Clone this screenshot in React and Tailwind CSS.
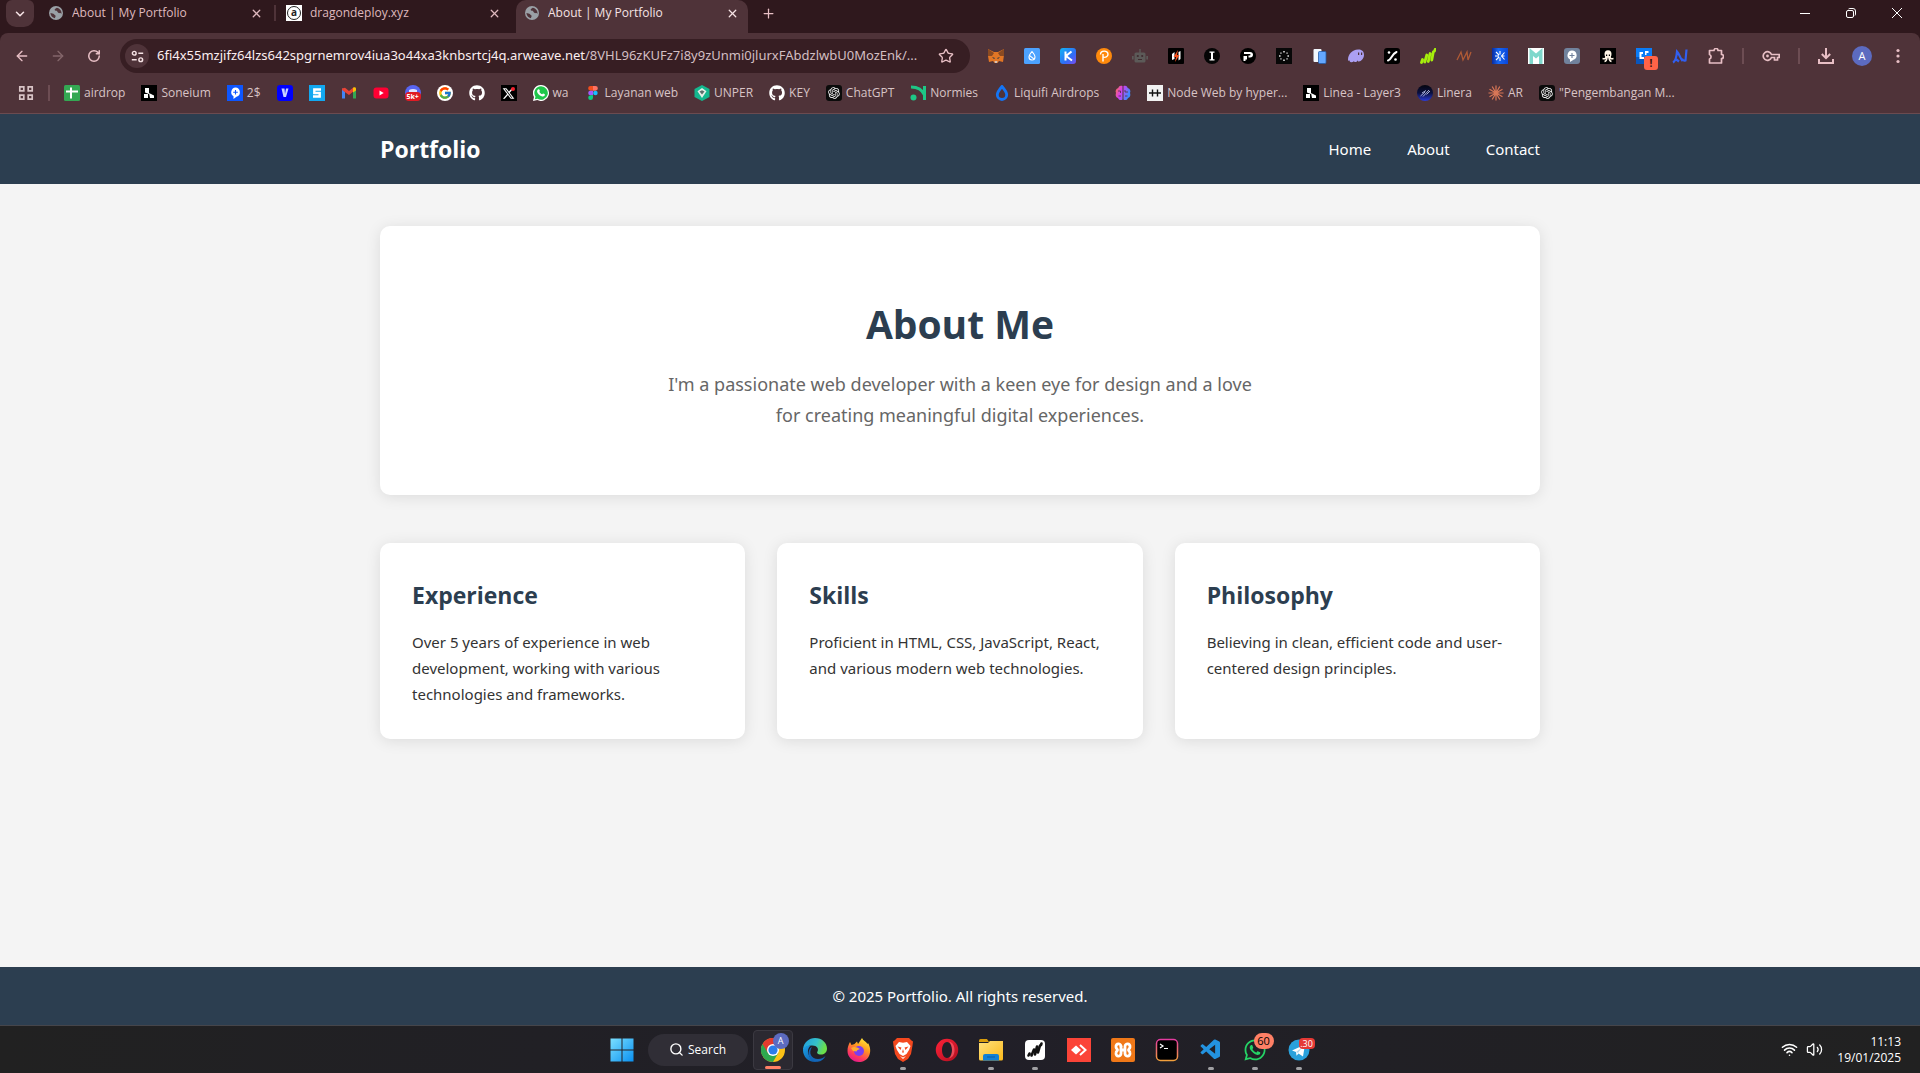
import React from "react";
import { FaGithub, FaXTwitter, FaWhatsapp } from "react-icons/fa6";
import { FcGoogle } from "react-icons/fc";
import { RiOpenaiFill } from "react-icons/ri";
import { VscVscode } from "react-icons/vsc";
import { ArrowLeft, ArrowRight, ChevronDown, Plus, RotateCw, Search, Star, X, Wifi, Volume2 } from "lucide-react";

/* ---------- small drawing helpers ---------- */

function Icon({ children, box = 16, className = "size-4" }) {
  return (
    <svg viewBox={`0 0 ${box} ${box}`} className={`${className} shrink-0`} aria-hidden="true">
      {children}
    </svg>
  );
}

const Globe = () => (
  <Icon className="size-[14px]">
    <circle cx="8" cy="8" r="8" fill="#9aa0a6" />
    <path d="M1.6 8c1.7.6 3.3.2 4.2 1.5.9 1.3 2 1.2 1.7 2.6L6.6 14C3.9 13.3 1.8 11 1.6 8zM8.8 2c-.8.9-2.6 1.3-2.3 2.6.3 1 2.2.5 2.8 1.5.7 1.2 1.5 2.3 3 2 1-.2 1.7.3 2 1 .3-3.4-1.800-6.400-5.500-7.100z" fill="#4f3339" />
  </Icon>
);

const Soneium = () => (
  <Icon>
    <path d="M0 0h16v16H0z" fill="#000" />
    <path d="M4 3h4v6l-4-1.5zM3 9h4v4H3zM8 8l5 2.5V13H9z" fill="#fff" />
  </Icon>
);

const OpenAi = () => (
  <span className="grid size-4 place-items-center rounded-[3px] bg-[#0b0b0b] text-[14px] text-white">
    <RiOpenaiFill />
  </span>
);

const WhatsappColor = () => (
  <Icon>
    <path d="M8 0a8 8 0 1 1-3.7 15.1L0 16l1-4A8 8 0 0 1 8 0z" fill="#fff" />
    <path d="M8 1.3a6.7 6.7 0 1 1-3.4 12.4l-2.8.6.7-2.6A6.7 6.7 0 0 1 8 1.3z" fill="#1fc64a" />
    <path d="M5.3 4.3c.6-.4 1 0 1.3.7.3.8.4 1-.2 1.7.6 1.3 1.5 2.1 2.8 2.6.6-.7.8-1 1.5-.6 1.2.6 1.4.6 1.1 1.5-.5 1.2-1.9 1.4-3.2 1-2.4-.8-4.2-2.8-4.5-4.5-.1-1 .4-2 1.2-2.4z" fill="#fff" />
  </Icon>
);

/* ---------- tab strip ---------- */

const TabIcon = ({ children }) => (
  <span className="grid size-4 shrink-0 place-items-center">{children}</span>
);

function Tab({ icon, title, active }) {
  return (
    <div
      role="tab"
      aria-selected={!!active}
      className={`flex w-[232px] shrink-0 items-center px-2 pb-[7px] ${
        active ? "rounded-t-[10px] bg-[#4f3339] text-[#f6e3e5]" : "text-[#dfb8be]"
      }`}
    >
      <TabIcon>{icon}</TabIcon>
      <span className="ml-2 flex-1 truncate text-[12px]">{title}</span>
      <button aria-label={`Close ${title}`} className="grid size-4 place-items-center">
        <X size={13} strokeWidth={2.4} />
      </button>
    </div>
  );
}

const WindowControls = () => (
  <div className="ml-auto flex h-[26px] items-center text-white">
    <button aria-label="Minimize" className="grid w-[46px] place-items-center">
      <Icon box={10} className="size-2.5"><path d="M0 5.5h10" stroke="currentColor" /></Icon>
    </button>
    <button aria-label="Restore" className="grid w-[46px] place-items-center">
      <Icon box={10} className="size-2.5">
        <rect x=".5" y="2.5" width="7" height="7" rx="1.5" fill="none" stroke="currentColor" />
        <path d="M2.5 1Q3 .5 4 .5h3Q9.5.5 9.5 3v3q0 1-.5 1.5" fill="none" stroke="currentColor" />
      </Icon>
    </button>
    <button aria-label="Close window" className="grid w-[46px] place-items-center">
      <Icon box={10} className="size-2.5"><path d="M0 0l10 10M10 0L0 10" stroke="currentColor" /></Icon>
    </button>
  </div>
);

function TabStrip() {
  return (
    <div className="flex h-[33px] items-stretch bg-[#2f181d]">
      <button aria-label="Search tabs" className="ml-1.5 grid h-[27px] w-7 place-items-center rounded-b-[10px] rounded-t-md bg-[#4f3339] text-[#f6e3e5]">
        <ChevronDown size={14} strokeWidth={2.6} />
      </button>
      <div role="tablist" className="ml-1.5 flex">
        <Tab icon={<Globe />} title="About | My Portfolio" />
        <span className="ml-0.5 mr-0.5 mt-[5px] h-4 w-0.5 bg-[#4f3339]" />
        <Tab
          icon={
            <span className="grid size-4 place-items-center bg-white">
              <span className="grid size-3.5 place-items-center rounded-full border border-[#222] pb-0.5 text-[10px] font-bold leading-none text-[#222]">a</span>
            </span>
          }
          title="dragondeploy.xyz"
        />
        <span className="w-1.5" />
        <Tab icon={<Globe />} title="About | My Portfolio" active />
      </div>
      <button aria-label="New tab" className="ml-3 grid h-[26px] w-4 place-items-center text-[#e8bfc5]">
        <Plus size={15} strokeWidth={2} />
      </button>
      <WindowControls />
    </div>
  );
}

/* ---------- toolbar ---------- */

const EXTENSIONS = [
  ["MetaMask", <Icon>
    <path d="M0 1l6 3h4l6-3v6l-1 7-4-1-1.5 2h-3L5 13l-4 1-1-6z" fill="#e27625" />
    <path d="M0 1l6 4-2 3H0zM16 1l-6 4 2 3h4z" fill="#8a4a22" />
    <path d="M4 9l3 1-1 1zM12 9l-3 1 1 1z" fill="#233447" />
    <path d="M6.5 13h3l-.5 2H7z" fill="#d7c1b3" />
  </Icon>],
  ["Sui wallet", <Icon>
    <rect width="16" height="16" rx="1.5" fill="#4ca2ff" />
    <path d="M8 3.500c1.800 2.200 3 3.700 3 5.500a3 3 0 0 1-6 0C5 7.200 6.200 5.700 8 3.500zM5.800 7.500c1.200 2 3.600 1.500 4 4" fill="none" stroke="#fff" strokeWidth="1.1" />
  </Icon>],
  ["Keplr", <Icon>
    <defs><linearGradient id="kp" x1="0" y1="0" x2="1" y2="1"><stop stopColor="#12b5f5" /><stop offset=".6" stopColor="#2f6df6" /><stop offset="1" stopColor="#7a4cf0" /></linearGradient></defs>
    <rect width="16" height="16" rx="3" fill="url(#kp)" />
    <path d="M5.5 3.5v9M11.5 3.5L6 8l6 4.5" fill="none" stroke="#fff" strokeWidth="2" />
  </Icon>],
  ["Petra", <Icon>
    <circle cx="8" cy="8" r="8" fill="#ff8a0c" />
    <path d="M7 13.500V6M4.500 6.500c0-4.500 7.500-4.500 7.500-.3 0 2.800-3 3.600-4.500 2.800" fill="none" stroke="#fff" strokeWidth="1.4" />
  </Icon>],
  ["Robot", <Icon>
    <rect x="2.500" y="4.500" width="11" height="10" rx="1.500" fill="#5c5a58" />
    <path d="M7.300 1h1.400v4H7.300zM0 8h1.700v3.500H0zM14.300 8H16v3.500h-1.700z" fill="#5c5a58" />
    <circle cx="5.800" cy="8" r="1.100" fill="#3f2b2f" /><circle cx="10.200" cy="8" r="1.100" fill="#3f2b2f" />
    <path d="M6 11.500h4" stroke="#3f2b2f" />
  </Icon>],
  ["Trading helper", <Icon>
    <rect width="16" height="16" rx="1" fill="#000" />
    <path d="M4 6l2.500-2v7L4 12zM10.500 4L12.500 3v8l-2 1.500z" fill="#fff" />
    <path d="M10 2L5.500 9H8l-1 5 4.500-7H9z" fill="#f4511e" />
  </Icon>],
  ["Injective", <Icon>
    <circle cx="8" cy="8" r="8" fill="#050505" /><path d="M5.500 3.500h5v1.300H9v6.400h1.500v1.300h-5v-1.300H7V4.800H5.500z" fill="#fff" />
  </Icon>],
  ["Pontem", <Icon>
    <circle cx="8" cy="8" r="8" fill="#000" /><path d="M4 4h6c4 0 4 5.500 0 5.500H8.500v-2h1.300c1 0 1-1.500 0-1.500H4zM3.500 8H7v3.500H5.500V13H3.500z" fill="#fff" />
  </Icon>],
  ["Dots", <Icon>
    <path d="M0 0h16v16H0z" fill="#080808" />
    <path d="M7.200 3h1.600v1.600H7.200zM7.200 11.400h1.600V13H7.200zM3 7.200h1.600v1.600H3zM11.400 7.200H13v1.600h-1.600zM4.300 4.500h1.300v1.300H4.300zM10.400 4.500h1.300v1.300h-1.300zM4.300 10.200h1.300v1.300H4.300zM10.400 10.200h1.300v1.300h-1.300z" fill="#ddd" />
  </Icon>],
  ["Cards", <Icon>
    <rect x="1.5" y="1" width="8" height="13" rx="1" fill="#f2f8ff" /><rect x="6.5" y="3.5" width="7.5" height="12" rx="1" fill="#64a7ff" stroke="#255da8" strokeWidth=".8" />
  </Icon>],
  ["Phantom", <Icon>
    <path d="M0 12C0 6 4 2 10 1.5c4-.3 6 2 6 5.5s-3 6.5-5 6.5c-1 0-1.3-.6-1-1.3-1 1.3-2 2-3 1.9-.8 0-1-.6-.8-1.2C5 14 3.6 14.5 2.5 14c-1-.4-.8-1.2-.6-1.8C1 13 0 13 0 12z" fill="#ab9ff2" />
    <path d="M10 4.5h1.2V7H10zM13 4.5h1.2V7H13z" fill="#4f3339" />
  </Icon>],
  ["Percent", <Icon>
    <rect width="16" height="16" rx="3" fill="#000" /><path d="M4 12.500c4-1 3-6 8.500-8.500" fill="none" stroke="#fff" strokeWidth="2" strokeLinecap="round" />
    <circle cx="5" cy="4.500" r="1.300" fill="#fff" /><circle cx="11.500" cy="11.500" r="1.300" fill="#fff" />
  </Icon>],
  ["Grass", <Icon>
    <path d="M1.5 14.500l1-3M4.800 14l2-7M8.300 13.500l1.800-8M11.800 12l1.500-8M14.500 3l.8-1.800" stroke="#a6ee0c" strokeWidth="2.800" strokeLinecap="round" />
  </Icon>],
  ["Nodepay", <Icon>
    <path d="M1 12L5 4l2 8 4-8 1 8 3-8" fill="none" stroke="#b05a35" strokeWidth="1.3" />
  </Icon>],
  ["Blue star", <Icon>
    <defs><linearGradient id="bs"><stop stopColor="#0a2a9c" /><stop offset=".4" stopColor="#1668f5" /><stop offset="1" stopColor="#0b46d8" /></linearGradient></defs>
    <path d="M0 0h16v16H0z" fill="url(#bs)" />
    <path d="M4 4l3 3M4 12l3-3M3 8h4M8 3v3.500M8 13V9.500M12.500 4.500L9.500 8l3 3.500M9.500 8h3" stroke="#fff" strokeWidth="1.1" fill="none" />
  </Icon>],
  ["M wallet", <Icon>
    <path d="M0 0h16v16H0z" fill="#fff" /><path d="M1.5 0L8 5.5 14.5 0v16H11V8L8 10.5 5 8v8H1.5z" fill="#7fd8cc" />
  </Icon>],
  ["Chat bubble", <Icon>
    <rect width="16" height="16" rx="3" fill="#71829c" /><path d="M8 2.5a4.8 4.8 0 0 1 1.5 9.3L6 14v-2.5A4.800 4.800 0 0 1 8 2.500z" fill="#fff" /><path d="M8 5v5M5.5 7.5h5" stroke="#71829c" strokeWidth="1.1" />
  </Icon>],
  ["Octopus", <Icon>
    <path d="M0 0h16v16H0z" fill="#000" />
    <ellipse cx="8" cy="6" rx="3.500" ry="3.800" fill="#fff5e6" />
    <path d="M6 8c0 3-1 3-3.500 2.500M7 9c0 3-.5 4-2.500 4.500M9 9c0 3 .5 4 2.500 4.500M10 8c0 3 1 3 3.500 2.500" fill="none" stroke="#fff5e6" strokeWidth="1.600" />
    <path d="M6 6.500h1.200V8H6zM8.800 6.500H10V8H8.800z" fill="#000" />
  </Icon>],
  ["Blocks", <span className="relative block">
    <Icon><path d="M0 0h16v16H0z" fill="#0a7cf7" /><path d="M0 9h9v7H0z" fill="#063e96" opacity=".6" /><path d="M3.500 4H7v2H5.500v3H8v2H3.500zM9 3h3.500v2h-2v2H9z" fill="#fff" /></Icon>
    <span className="absolute left-2 top-2 grid h-3.5 w-3.5 place-items-center rounded-[3px] bg-[#ff6347] text-[10px] font-bold leading-none text-[#31100c]">!</span>
  </span>],
  ["Nightly", <Icon>
    <path d="M1 14.500c2-1 3.500-5 4-11 2 2 4 8 5.500 9.500M3 10.500l4 3M14.500 1.500l-1 11c-1.500.5-3-.5-3.500-2" fill="none" stroke="#315ff0" strokeWidth="2.200" />
  </Icon>],
];

const Divider = () => <span className="h-4 w-0.5 shrink-0 bg-[#6d4d53]" />;

function Toolbar() {
  return (
    <div className="bg-[#2f181d]">
      <div className="flex h-[46px] items-center rounded-t-[8px] bg-[#4f3339] pr-3.5 text-[#e8bfc5]">
        <button aria-label="Back" className="ml-3.5 grid w-4 place-items-center"><ArrowLeft size={16} /></button>
        <button aria-label="Forward" className="ml-5 grid w-4 place-items-center text-[#84666b]"><ArrowRight size={16} /></button>
        <button aria-label="Reload" className="ml-5 grid w-4 place-items-center"><RotateCw size={14} strokeWidth={2.6} /></button>
        <div className="ml-[18px] flex h-[34px] min-w-0 flex-1 items-center rounded-full bg-[#371e23] pl-[5px] pr-4">
          <button aria-label="Site information" className="grid size-6 shrink-0 place-items-center rounded-full bg-[#4f3339] text-[#f6e3e5]">
            <Icon className="size-[13px]">
              <path d="M9 4h6M1 12h6" stroke="currentColor" strokeWidth="1.8" />
              <circle cx="4" cy="4" r="2.3" fill="none" stroke="currentColor" strokeWidth="1.8" />
              <circle cx="12" cy="12" r="2.3" fill="none" stroke="currentColor" strokeWidth="1.8" />
            </Icon>
          </button>
          <a href="#address" className="ml-2 min-w-0 flex-1 whitespace-nowrap font-['Noto_Sans','Open_Sans',sans-serif] text-[13px] text-[#d3bfc2]">
            <span className="text-[#fbeef0]">6fi4x55mzjifz64lzs642spgrnemrov4iua3o44xa3knbsrtcj4q.arweave.net</span>/8VHL96zKUFz7i8y9zUnmi0jlurxFAbdzlwbU0MozEnk/...
          </a>
          <button aria-label="Bookmark this page" className="ml-3"><Star size={16} /></button>
        </div>
        <div className="ml-[18px] flex shrink-0 items-center gap-5">
          {EXTENSIONS.map(([name, icon]) => (
            <button key={name} aria-label={name} className="size-4">{icon}</button>
          ))}
          <button aria-label="Extensions" className="size-4">
            <Icon><path d="M1.5 2.5H6a2 2 0 0 1 4 0h3.5v4a2 2 0 0 1 0 4V15h-12v-4a2.4 2.4 0 0 0 0-4.5z" fill="none" stroke="currentColor" strokeWidth="1.7" strokeLinejoin="round" /></Icon>
          </button>
        </div>
        <div className="ml-[18px] flex shrink-0 items-center gap-[18px]">
          <Divider />
          <button aria-label="Passwords" className="w-[18px]">
            <Icon box={18} className="size-[18px]"><path d="M9.5 7.5A4.3 4.3 0 1 0 9.5 10.5h3V13h3v-2.500h1.700v-3z" fill="none" stroke="currentColor" strokeWidth="1.7" /><circle cx="5.500" cy="9" r="1.4" fill="currentColor" /></Icon>
          </button>
          <Divider />
          <button aria-label="Downloads" className="size-4">
            <Icon><path d="M8 0v10M3.8 6L8 10.2 12.2 6M1 11v4h14v-4" fill="none" stroke="currentColor" strokeWidth="2" /></Icon>
          </button>
          <button aria-label="Profile" className="grid size-5 place-items-center rounded-full bg-[#5c6bc0] text-[11px] text-white">A</button>
          <button aria-label="Menu" className="grid w-4 place-items-center">
            <Icon><circle cx="8" cy="2.5" r="1.6" fill="currentColor" /><circle cx="8" cy="8" r="1.6" fill="currentColor" /><circle cx="8" cy="13.5" r="1.6" fill="currentColor" /></Icon>
          </button>
        </div>
      </div>
    </div>
  );
}

/* ---------- bookmarks ---------- */

const BOOKMARKS = [
  ["airdrop", <Icon><rect width="16" height="16" rx="1.5" fill="#34a853" /><path d="M7 2.5v11M2 6.5h12" stroke="#fff" strokeWidth="2" /></Icon>],
  ["Soneium", <Soneium />],
  ["2$", <Icon><path d="M0 0h16v16H0z" fill="#0d56ff" /><path d="M8.500 2.500a4.700 4.700 0 0 1 1 9.200L6.500 14v-2.800A4.700 4.700 0 0 1 8.500 2.500z" fill="#fff" /><path d="M8.500 5v4.500M6.200 7.200h4.600" stroke="#0d56ff" strokeWidth="1.1" /></Icon>],
  ["", <Icon><rect width="16" height="16" rx="3" fill="#0000ff" /><path d="M4.500 3.500l2 8.500h2.500l2.500-8.500H9L8 9 7.500 3.500z" fill="#c9d4ff" /></Icon>, "Vana"],
  ["", <Icon><path d="M0 0h16v16H0z" fill="#12a8f0" /><path d="M12 4.500H5.300V8h5.400v3.500H4" fill="none" stroke="#fff" strokeWidth="2.400" /></Icon>, "Steam"],
  ["", <Icon><path d="M1 3v10.500h3V7z" fill="#4285f4" /><path d="M15 3v10.500h-3V7z" fill="#34a853" /><path d="M1 3.500l3-.8L8 6l4-3.300v4L8 10 1 5z" fill="#ea4335" /><path d="M12 2.700c2-1 3 0 3 1V5.500l-3 2z" fill="#fbbc04" /></Icon>, "Gmail"],
  ["", <Icon><rect x=".5" y="2.500" width="15" height="11" rx="3" fill="#ff0033" /><path d="M6.500 5.500v5L10.700 8z" fill="#fff" /></Icon>, "YouTube"],
  ["", <span className="relative block size-4">
    <Icon><circle cx="8" cy="8" r="8" fill="#5865f2" /><path d="M4 5q4-2 8 0v3H4z" fill="#dfe2ff" /></Icon>
    <span className="absolute inset-x-0 bottom-0 rounded-sm bg-[#e01b24] text-center text-[7px] font-bold leading-[9px] text-white">5k+</span>
  </span>, "Discord"],
  ["", <span className="grid size-4 place-items-center rounded-full bg-white text-[14px]"><FcGoogle /></span>, "Google"],
  ["", <FaGithub className="size-4 text-white" />, "GitHub"],
  ["", <span className="relative grid size-4 place-items-center bg-black text-[13px] text-white"><FaXTwitter /><span className="absolute right-0.5 top-0.5 size-1 rounded-full bg-[#f4212e]" /></span>, "X"],
  ["wa", <WhatsappColor />],
  ["Layanan web", <Icon><path d="M8 1H5.500a2.300 2.300 0 0 0 0 4.700H8z" fill="#f24e1e" /><path d="M8 1h2.500a2.300 2.300 0 0 1 0 4.700H8z" fill="#ff7262" /><path d="M8 5.700H5.500a2.300 2.300 0 0 0 0 4.600H8z" fill="#a259ff" /><circle cx="10.400" cy="8" r="2.300" fill="#1abcfe" /><path d="M8 10.300H5.500A2.400 2.400 0 1 0 8 12.700z" fill="#0acf83" /></Icon>],
  ["UNPER", <Icon><path d="M8 0l7.500 4v8L8 16 .5 12V4z" fill="#14b88f" /><path d="M8 3l4.500 3.200L8 13 3.500 6.200z" fill="#e6efe9" /><path d="M5.500 6.500L8 5.200l2.500 1.300L8 9.500z" fill="#5d6f6c" /></Icon>],
  ["KEY", <FaGithub className="size-4 text-white" />],
  ["ChatGPT", <OpenAi />],
  ["Normies", <Icon><path d="M1 2c6 0 11 2 13.500 8M14.500 1v14" stroke="#1ec786" strokeWidth="3" fill="none" /><circle cx="3.500" cy="12.500" r="3" fill="#1ec786" /></Icon>],
  ["Liquifi Airdrops", <Icon><path d="M8 1.500c3 3.500 4.700 5.800 4.700 8.300a4.700 4.700 0 0 1-9.400 0C3.300 7.300 5 5 8 1.500z" fill="none" stroke="#1475f5" strokeWidth="2.800" /></Icon>],
  ["", <Icon>
    <defs><linearGradient id="br" x2="1" y2=".4"><stop stopColor="#ff7a3c" /><stop offset=".45" stopColor="#d53cf0" /><stop offset="1" stopColor="#3b8cff" /></linearGradient></defs>
    <path d="M7.500 1C5 0 3.500 1.500 3.300 3 1 3.500 0 6 1 8c-1 3 .5 4.500 2 5 1 2.500 3.500 2.500 4.500 1.500zM8.500 1c2.500-1 4 .5 4.200 2C15 3.500 16 6 15 8c1 3-.5 4.500-2 5-1 2.500-3.500 2.500-4.500 1.500z" fill="url(#br)" />
    <path d="M3 6h2.500v2M3.500 11H6M10 5v2h3M10 11h2.500" fill="none" stroke="#4f3339" strokeWidth=".8" />
  </Icon>, "Brain"],
  ["Node Web by hyper...", <Icon><path d="M0 0h16v16H0z" fill="#f2f2f2" /><path d="M2 8h12M5.500 4.500v7M10.500 4.500v7" stroke="#111" strokeWidth="1.4" /></Icon>],
  ["Linea - Layer3", <Soneium />],
  ["Linera", <Icon><defs><linearGradient id="ln" x2="0" y2="1"><stop stopColor="#05060f" /><stop offset=".5" stopColor="#0a1040" /><stop offset="1" stopColor="#2b3bd8" /></linearGradient></defs><circle cx="8" cy="8" r="8" fill="url(#ln)" /><path d="M3.500 11L8 7M6 11.500L12 5M5 8l4-2.500M9.500 9.500L13 6" stroke="#cfd6ff" strokeWidth=".8" /></Icon>],
  ["AR", <Icon><path d="M8 .5v15M.5 8h15M4.200 1.500l7.600 13M11.800 1.500l-7.600 13M1.500 4.200l13 7.600M14.500 4.200l-13 7.600" stroke="#d97757" strokeWidth="1.200" /></Icon>],
  ['"Pengembangan M...', <OpenAi />],
];

function Bookmarks() {
  return (
    <nav aria-label="Bookmarks" className="flex h-[35px] items-center border-b border-[#6b4b50] bg-[#4f3339] pb-1.5 text-[12px] text-[#d8c4c6]">
      <button aria-label="Apps" className="ml-[18px] size-4">
        <Icon><path d="M1.8 1.8h4v4h-4zM10.2 1.8h4v4h-4zM1.8 10.2h4v4h-4zM10.200 10.200h4v4h-4z" fill="none" stroke="currentColor" strokeWidth="1.7" /></Icon>
      </button>
      <span className="ml-3.5 h-4 w-0.5 bg-[#6d4d53]" />
      <div className="ml-3.5 flex items-center gap-4">
        {BOOKMARKS.map(([label, icon, name], i) => (
          <a key={i} href="#bookmark" aria-label={label || name} className="flex shrink-0 items-center gap-1 whitespace-nowrap">
            {icon}
            {label && <span>{label}</span>}
          </a>
        ))}
      </div>
    </nav>
  );
}

/* ---------- page ---------- */

const CARDS = [
  ["Experience", "Over 5 years of experience in web development, working with various technologies and frameworks."],
  ["Skills", "Proficient in HTML, CSS, JavaScript, React, and various modern web technologies."],
  ["Philosophy", "Believing in clean, efficient code and user-centered design principles."],
];

function Page() {
  return (
    <div className="flex min-h-0 flex-1 flex-col bg-[#f4f4f4] font-['Noto_Sans','Open_Sans',sans-serif] text-[#333]">
      <header className="bg-[#2c3e50] py-4 text-white">
        <div className="mx-auto flex max-w-[1200px] items-center justify-between px-5">
          <a href="#home" className="font-['Open_Sans','Noto_Sans',sans-serif] text-[23px] font-bold leading-[38px]">Portfolio</a>
          <nav className="flex gap-9 text-[15px]">
            <a href="#home">Home</a>
            <a href="#about">About</a>
            <a href="#contact">Contact</a>
          </nav>
        </div>
      </header>
      <main className="mx-auto w-full max-w-[1200px] flex-1 px-5 pt-[42px]">
        <section className="rounded-[10px] bg-white px-8 py-16 text-center shadow-[0_2px_15px_rgba(0,0,0,0.1)]">
          <h1 className="font-['Open_Sans','Noto_Sans',sans-serif] text-[39px] font-bold leading-[67px] text-[#2c3e50]">About Me</h1>
          <p className="mx-auto mt-3 max-w-[600px] text-[18px] leading-[31px] text-[#666]">
            I'm a passionate web developer with a keen eye for design and a love for creating meaningful digital experiences.
          </p>
        </section>
        <div className="mt-12 grid grid-cols-3 gap-8">
          {CARDS.map(([title, body]) => (
            <article key={title} className="rounded-[10px] bg-white p-8 shadow-[0_2px_15px_rgba(0,0,0,0.1)]">
              <h2 className="font-['Open_Sans','Noto_Sans',sans-serif] text-[23px] font-bold leading-[40px] text-[#2c3e50]">{title}</h2>
              <p className="mt-3.5 text-[15px] leading-[26px]">{body}</p>
            </article>
          ))}
        </div>
      </main>
      <footer className="bg-[#2c3e50] py-4 text-center text-[15px] leading-[26px] text-white">
        <p>© 2025 Portfolio. All rights reserved.</p>
      </footer>
    </div>
  );
}

/* ---------- taskbar ---------- */

const TASKS = [
  ["Edge", <Icon box={24} className="size-6">
    <defs>
      <linearGradient id="e1" x1="0" y1="0" x2="1" y2=".3"><stop stopColor="#1f9de0" /><stop offset=".6" stopColor="#35c1c9" /><stop offset="1" stopColor="#6be04a" /></linearGradient>
      <linearGradient id="e2" x1="0" x2="1" y1="0" y2="1"><stop stopColor="#1ba2e8" /><stop offset="1" stopColor="#0c4fa0" /></linearGradient>
    </defs>
    <path d="M0 11C1 4 6 0 12 0c7 0 12 5 12 10.5 0 4-3 6-6 6-3.5 0-4.5-1.5-3.5-3 1.5-2.5-.5-6-5-6C5 7.500 1 9 0 13z" fill="url(#e1)" />
    <path d="M0 12c.5-3 4-5 8-4.5-3 2-4 6-2 10 2 4 6 6 10 6.1-1.2.4-2.5.4-4 .4C5 24 0 18.5 0 12z" fill="url(#e2)" />
    <path d="M9 9c-4 6-.5 12 6 12 3 0 5.5-1 7.500-3-1.500 3.500-4.500 5.500-8 5.800C8.500 23.500 4 18 6 12.500 6.700 10.500 8 9.300 9 9z" fill="#1466b8" />
  </Icon>],
  ["Firefox", <Icon box={24} className="size-6">
    <defs><linearGradient id="ff" x1=".8" y1="0" x2=".3" y2="1"><stop stopColor="#fff03c" /><stop offset=".4" stopColor="#ff9a1f" /><stop offset=".75" stopColor="#ff3b5c" /><stop offset="1" stopColor="#e3178f" /></linearGradient></defs>
    <path d="M3 4l1.500 3 3-1L10 3.500 11 6l4-6c1 2.500 4 3.500 5.500 6l.5-1c2.500 4 3 9 1 13-2 4-6 6-10 6C5.500 24 .5 19 .5 13 .5 9 1.500 7 3 4z" fill="url(#ff)" />
    <circle cx="12" cy="13" r="5" fill="#7a3df0" /><path d="M4 10c3-2 6-1 9 1-2 .5-3 1-3.500 2.500L6 13z" fill="#ffad2e" />
  </Icon>],
  ["Brave", <Icon box={24} className="size-6">
    <path d="M6 0h12l2.500 2.500 1.500 1-.5 4L20 16l-3 5-5 3-5-3-3-5L2.500 7.500 2 3.500l1.500-1z" fill="#f4481e" />
    <path d="M8 4l4 .8L16 4l3.500 4-1.500 4-2.500 4L12 18l-3.500-2L6 12 4.500 8zM9 18l3 1.500 3-1.500-3 3z" fill="#fff" />
    <path d="M6.500 8.500l4 1-1 2.500zM17.500 8.500l-4 1 1 2.500zM12 11l1 3.500h-2z" fill="#f4481e" />
  </Icon>, true],
  ["Opera", <Icon box={24} className="size-6">
    <defs><linearGradient id="op" x1="0" x2="1" y1="0" y2="1"><stop stopColor="#ff2238" /><stop offset="1" stopColor="#b00f20" /></linearGradient></defs>
    <path fillRule="evenodd" d="M12 .8a11.200 11.200 0 1 1 0 22.400A11.200 11.200 0 0 1 12 .8zM12 4C8.800 4 7 8 7 12s1.800 8 5 8 5-4 5-8-1.800-8-5-8z" fill="url(#op)" />
    <path d="M14 3.500c4 1 5.500 4.500 5.500 8.500s-1.500 7.500-5.500 8.500c2-2 3-5 3-8.500s-1-6.500-3-8.500z" fill="#ff6f78" opacity=".6" />
  </Icon>],
  ["File Explorer", <Icon box={24} className="size-6">
    <path d="M0 2.500Q0 1 1.500 1H8l2 3H0z" fill="#d99c0b" />
    <defs><linearGradient id="fx" x2="1" y2="1"><stop stopColor="#ffe17d" /><stop offset="1" stopColor="#fbb91b" /></linearGradient></defs>
    <path d="M0 5h9l2-2h13v18q0 1.500-1.500 1.500h-21Q0 22.500 0 21z" fill="url(#fx)" />
    <path d="M4 18q0-2 2-2h12q2 0 2 2v4.500H4z" fill="#1180d6" /><path d="M8 19h8" stroke="#0a5da5" />
  </Icon>, true],
  ["Wings", <Icon box={24} className="size-6">
    <rect x="2" y="2" width="20" height="20" rx="4" fill="#fff" />
    <path d="M5.500 17.500l1-2M8.500 17.500l2.500-6M12 16.500l2-8M15 14.500l2-7M18 7l.5-1.500" stroke="#111" strokeWidth="2.600" strokeLinecap="round" />
  </Icon>, true],
  ["AnyDesk", <Icon box={24} className="size-6">
    <path d="M0 0h24v24H0z" fill="#fb4438" /><path d="M9 7.500l5 4.500-5 4.500L4 12z" fill="#fff" /><path d="M13 7l5.500 5-5.500 5" fill="none" stroke="#fff" strokeWidth="2" />
  </Icon>],
  ["XAMPP", <Icon box={24} className="size-6">
    <rect width="24" height="24" rx="2" fill="#f07818" />
    <g fill="none" stroke="#fff" strokeWidth="2.800" strokeLinecap="round" strokeLinejoin="round">
      <path d="M10 8.500C10 5 4.500 5 5 9c.2 2 1.500 2 1.500 3S5.200 13 5 15c-.5 4 5 4 5 .5V12h4v3.500c0 3.500 5.500 3.500 5-.5-.2-2-1.500-2-1.500-3s1.300-1 1.500-3c.5-4-5-4-5-.5V12" />
      <path d="M10 12V8.500" />
    </g>
  </Icon>],
  ["Terminal", <Icon box={24} className="size-6">
    <defs><linearGradient id="tm" x2="0" y2="1"><stop stopColor="#e43ba0" /><stop offset="1" stopColor="#f2a03c" /></linearGradient></defs>
    <rect x="1.500" y="1.500" width="21" height="21" rx="4" fill="#000" stroke="url(#tm)" strokeWidth="1.500" />
    <path d="M5 6l3 2-3 2M9 10.500h4" fill="none" stroke="#fff" strokeWidth="1.200" />
  </Icon>],
  ["VS Code", <VscVscode className="size-6 text-[#2393e0]" />, true],
  ["WhatsApp", <span className="relative block">
    <FaWhatsapp className="size-6 text-[#25d366]" />
    <span className="absolute -top-[5px] left-[11px] grid h-4 w-5 place-items-center rounded-full bg-[#ff8066] text-[11px] leading-none text-black">60</span>
  </span>, true],
  ["Telegram", <span className="relative block">
    <Icon box={24} className="size-6">
      <circle cx="12" cy="12" r="10.500" fill="#2aa1dc" />
      <path d="M5 12.500L18 6.500l-2 12-4.500-3-2 2.200-.5-3.700z" fill="#fff" /><path d="M9 14l6.500-5-4.500 6z" fill="#b5d8ec" />
    </Icon>
    <span className="absolute left-3 top-0 grid h-[11px] w-4 place-items-center rounded-sm bg-[#e53935] text-[9px] leading-none text-white">.30</span>
  </span>, true],
];

function Taskbar() {
  return (
    <div className="grid h-12 grid-cols-[1fr_auto_1fr] items-center border-t border-[#45454a] bg-linear-to-r from-[#212121] via-[#211f28] to-[#212121] text-[12px] text-white">
      <span />
      <div className="flex items-center pl-2.5">
        <button aria-label="Start" className="mr-3.5">
          <Icon box={24} className="size-6">
            <defs><linearGradient id="wn" x2="1" y2="1"><stop stopColor="#7be0ff" /><stop offset="1" stopColor="#0a90f0" /></linearGradient></defs>
            <path d="M.5.5h11v11H.5zM12.500.5h11v11h-11zM.5 12.500h11v11H.5zM12.500 12.500h11v11h-11z" fill="url(#wn)" />
          </Icon>
        </button>
        <button className="flex h-8 w-[100px] items-center justify-center gap-1 rounded-full bg-[#302e36]">
          <Search size={15} strokeWidth={2.2} />
          <span>Search</span>
        </button>
        <button aria-label="Chrome" className="relative ml-[5px] grid h-10 w-10 place-items-center rounded-[4px] border border-[#3b3941] bg-[#2b2931]">
          <Icon box={24} className="size-6">
            <circle cx="12" cy="12" r="12" fill="#fbc116" />
            <path d="M12 12L1.600 6A12 12 0 0 0 12 24l5.200-9z" fill="#2da94f" />
            <path d="M12 6.500h10.700A12 12 0 0 0 1.600 6L7 15z" fill="#e33b2e" />
            <circle cx="12" cy="12" r="6" fill="#fff" /><circle cx="12" cy="12" r="4.600" fill="#2b7de9" />
          </Icon>
          <span className="absolute right-[3px] top-[2px] grid size-4 place-items-center rounded-full bg-[#5c6bc0] text-[9px] leading-none">A</span>
          <span className="absolute bottom-0 h-[3px] w-4 rounded-full bg-[#ff8066]" />
        </button>
        {TASKS.map(([name, icon, open]) => (
          <button key={name} aria-label={name} className="relative grid h-10 w-11 place-items-center">
            {icon}
            {open && <span className="absolute bottom-0 h-[3px] w-1.5 rounded-full bg-[#a0a0a3]" />}
          </button>
        ))}
      </div>
      <div className="flex items-center justify-end pr-[19px]">
        <Wifi size={17} strokeWidth={2.2} className="mr-2" />
        <Volume2 size={17} strokeWidth={1.8} className="mr-3.5" />
        <time dateTime="2025-01-19T11:13" className="text-right leading-4">
          11:13<br />19/01/2025
        </time>
      </div>
    </div>
  );
}

export default function App() {
  return (
    <div className="flex h-screen flex-col overflow-hidden font-['Open_Sans','Noto_Sans',sans-serif]">
      <TabStrip />
      <Toolbar />
      <Bookmarks />
      <Page />
      <Taskbar />
    </div>
  );
}
